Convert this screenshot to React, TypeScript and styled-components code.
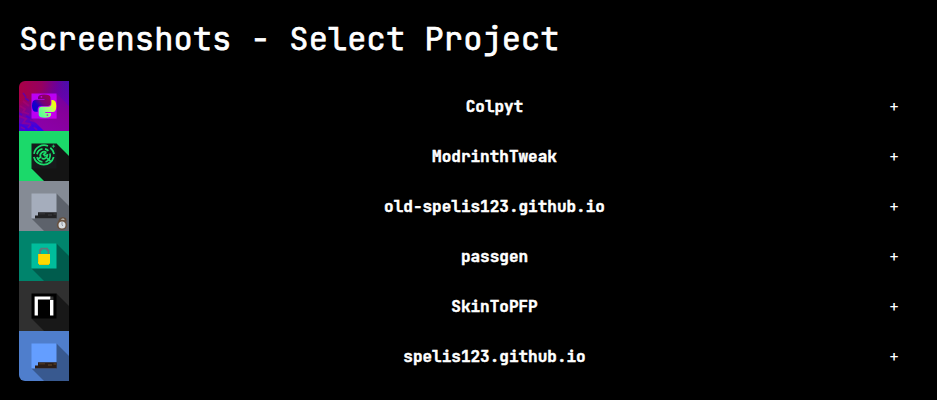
import React from "react";
import styled, { createGlobalStyle } from "styled-components";

const GlobalStyle = createGlobalStyle`
  * { box-sizing: border-box; }
  html, body { margin: 0; background: #000; }
  body {
    color: #fff;
    font-family: "JetBrains Mono", "DejaVu Sans Mono", "Liberation Mono", monospace;
    overflow: hidden;
  }
`;

const Page = styled.main`
  height: 400px;
  padding: 18px 18px 0 19px;
`;

const Title = styled.h1`
  margin: 0 0 21px;
  height: 42px;
  line-height: 42px;
  font-size: 32px;
  font-weight: 400;
  letter-spacing: 0.11px;
  white-space: pre;
  -webkit-text-stroke: 0.75px #fff;
`;

const ProjectList = styled.ul`
  margin: 0;
  padding: 0;
  width: 900px;
  list-style: none;
  border-radius: 6px;
  overflow: hidden;
`;

const ProjectRow = styled.li`
  display: grid;
  grid-template-columns: 50px 1fr 50px;
  height: 50px;
  align-items: center;
`;

const ProjectIcon = styled.svg`
  display: block;
  grid-area: 1 / 1;
  width: 50px;
  height: 50px;
`;

const ProjectName = styled.span`
  grid-area: 1 / 2 / 2 / 4;
  padding: 2px 0 0 1px;
  text-align: center;
  font-size: 16px;
  line-height: 22px;
  font-weight: 700;
  -webkit-text-stroke: 0.5px #fff;
`;

const ExpandButton = styled.button`
  display: grid;
  grid-area: 1 / 3;
  place-items: center;
  width: 50px;
  height: 50px;
  padding: 2px 0 0;
  border: 0;
  background: none;
  color: #fff;
  font-family: inherit;
  font-size: 16px;
  font-weight: 400;
  line-height: 22px;
`;

const SHADOW = "M37.5 12.5 50 25V50H25L12.5 37.5Z";

const ColpytArt = () => (
  <>
    <defs>
      <linearGradient id="cp-top" x1="0" y1="0" x2="1" y2="0">
        <stop offset="0" stopColor="#a90046" />
        <stop offset=".45" stopColor="#960060" />
        <stop offset=".75" stopColor="#6d0098" />
        <stop offset="1" stopColor="#4112b4" />
      </linearGradient>
      <linearGradient id="cp-left" x1="0" y1="0" x2=".4" y2="1">
        <stop offset=".3" stopColor="#6a00a0" stopOpacity="0" />
        <stop offset=".7" stopColor="#6a00b4" />
        <stop offset="1" stopColor="#3000f0" />
      </linearGradient>
      <linearGradient id="cp-shadow" x1="1" y1="0" x2=".5" y2="1">
        <stop offset="0" stopColor="#7200a0" />
        <stop offset=".5" stopColor="#87009a" />
        <stop offset="1" stopColor="#8b00a8" />
      </linearGradient>
      <linearGradient id="cp-snake-a" x1="1" y1="0" x2="0" y2=".8">
        <stop offset="0" stopColor="#a00050" />
        <stop offset=".5" stopColor="#750078" />
        <stop offset=".75" stopColor="#1800c8" />
        <stop offset="1" stopColor="#0800d0" />
      </linearGradient>
      <linearGradient id="cp-snake-b" x1="0" y1=".7" x2="1" y2="0">
        <stop offset="0" stopColor="#58ff96" />
        <stop offset=".5" stopColor="#a8ff78" />
        <stop offset=".8" stopColor="#f0ff10" />
      </linearGradient>
    </defs>
    <rect width="50" height="50" fill="url(#cp-top)" />
    <rect width="50" height="50" fill="url(#cp-left)" />
    <path
      d="M1 25l5 3-2 3 6 2M0 35l7 3-3 4 8 1-3 4M11 39l6 2M4 20l6 5M2 46l4 2M15 46l3 3"
      stroke="#b40078"
      strokeWidth="1.8"
      opacity=".45"
      fill="none"
    />
    <path
      d="M0 32l3 2M7 35l4 2M0 43l6 3 3 4M12 42l2 3 6 2M6 17l4 3M4 12l3 4"
      stroke="#3500e8"
      strokeWidth="1.7"
      opacity=".55"
      fill="none"
    />
    <path d={SHADOW} fill="url(#cp-shadow)" />
    <rect x="12.5" y="12.5" width="25" height="25" fill="#bb00f4" />
    <path d="M37.5 14v23.5H20z" fill="#d000e8" opacity=".55" />
    <path
      d="M19 16.4q0-3 6.2-3t6.3 3v5.6q0 3-3 3H22q-3.3 0-3.3 3.4v2.4h-2q-3.7 0-3.7-6t3.7-6H25.5v-.8H19z"
      fill="url(#cp-snake-a)"
    />
    <path
      d="M32.4 18.9h1.3q3.6 0 3.6 6.1t-3.6 6.1h-7.5v.8h5.9v1.7q0 3.2-6.2 3.2t-6.2-3.2v-4.8q0-3.1 3.1-3.1h6.4q3.2 0 3.2-3.4z"
      fill="url(#cp-snake-b)"
    />
    <circle cx="22.4" cy="15.8" r=".9" fill="#d000d8" />
    <circle cx="28.4" cy="34.1" r=".9" fill="#c51bb8" />
  </>
);

const ModrinthTweakArt = () => (
  <>
    <rect width="50" height="50" fill="#1bd96a" />
    <path d={SHADOW} fill="#141414" />
    <rect x="12.5" y="12.5" width="25" height="25" fill="#17191b" />
    <g fill="none" stroke="#1bd96a" strokeWidth="1.75">
      <path d="M29 15a10.3 10.3 0 0 0-14 7.8M14.8 26a10.3 10.3 0 0 0 19.9 0M35.1 23a10.3 10.3 0 0 0-3.8-6.3" />
      <path d="M23.5 17.9a6.9 6.9 0 0 0-5.5 5.4M18 26a6.9 6.9 0 0 0 5.5 5M26.5 31a6.9 6.9 0 0 0 4.4-8.6M29.4 19.8a6.9 6.9 0 0 0-3.4-2" />
      <path d="M27.3 21.4a3.8 3.8 0 0 0-5.6 4.8l-3.3 2M22.7 27.3a3.8 3.8 0 0 0 5.7-3.3l-2.5.8-1.2-1.4 2.7-2M28 27.2l3.5 3" />
      <path d="M34.4 13.6v3.2M32.8 15.2H36" strokeWidth=".8" />
    </g>
  </>
);

const PlainProjectArt = ({ background, tile, shadow, dark, mid }: {
  background: string;
  tile: string;
  shadow: string;
  dark: string;
  mid: string;
}) => (
  <>
    <rect width="50" height="50" fill={background} />
    <path d={SHADOW} fill={shadow} />
    <rect x="12.5" y="12.5" width="25" height="25" fill={tile} />
    <path d="M19 31.3h18.8v6.2H16v-3h3z" fill={dark} />
    <path d="M20 32h6v1.5h-6zM29 33h4v2h-4zM34.5 32h2.5v2h-2.5z" fill={mid} />
  </>
);

const StopwatchArt = () => (
  <>
    <path d="M40.7 37l3.2-1 3 1 1 3.2H39.3z" fill="#65503f" />
    <path d="M41.5 39.2l1.6-1.6h1.6l1.3 1.6z" fill="#b9b5ae" />
    <circle cx="43" cy="43.9" r="5.1" fill="#68513f" />
    <circle cx="43" cy="43.9" r="3.5" fill="#d8dde2" />
    <path d="M43 41v3l1 1" stroke="#7d8593" strokeWidth=".8" fill="none" />
  </>
);

const PassgenArt = () => (
  <>
    <rect width="50" height="50" fill="#00846c" />
    <path d={SHADOW} fill="#005c4d" />
    <rect x="12.5" y="12.5" width="25" height="25" fill="#00bd9c" />
    <path d="M21 23v-3.8h1.2v-1.5h6v1.5h1.2V23" fill="none" stroke="#60777a" strokeWidth="1.7" />
    <path d="M19 23h12v9.7h-1V34H20v-1.3h-1z" fill="#ffd900" />
    <path d="M19 23h1v8h-1zM20 33h10v1H20z" fill="#f0c500" />
  </>
);

const SkinToPfpArt = () => (
  <>
    <rect width="50" height="50" fill="#303030" />
    <path d={SHADOW} fill="#181818" />
    <rect x="12.5" y="12.5" width="25" height="25" fill="#000" />
    <path d="M15.6 15.6h16v3H18.9v16h-3.3z" fill="#fff" />
    <path d="M31 19h3.4v15.6H31z" fill="#fff" />
    <path d="M31.6 15.6h2.8V19h-2.8z" fill="#333" />
  </>
);

const projects = [
  { name: "Colpyt", art: <ColpytArt /> },
  { name: "ModrinthTweak", art: <ModrinthTweakArt /> },
  {
    name: "old-spelis123.github.io",
    art: (
      <>
        <PlainProjectArt background="#858b95" tile="#a5adbc" shadow="#5d626b" dark="#222224" mid="#303033" />
        <StopwatchArt />
      </>
    ),
  },
  { name: "passgen", art: <PassgenArt /> },
  { name: "SkinToPFP", art: <SkinToPfpArt /> },
  {
    name: "spelis123.github.io",
    art: <PlainProjectArt background="#4f7ecc" tile="#649eff" shadow="#38598f" dark="#2b1d17" mid="#48331f" />,
  },
];

export default function App() {
  return (
    <>
      <GlobalStyle />
      <Page>
        <Title>Screenshots - Select Project</Title>
        <ProjectList>
          {projects.map(({ name, art }) => (
            <ProjectRow key={name}>
              <ProjectIcon viewBox="0 0 50 50" aria-hidden="true">{art}</ProjectIcon>
              <ProjectName>{name}</ProjectName>
              <ExpandButton>+</ExpandButton>
            </ProjectRow>
          ))}
        </ProjectList>
      </Page>
    </>
  );
}
